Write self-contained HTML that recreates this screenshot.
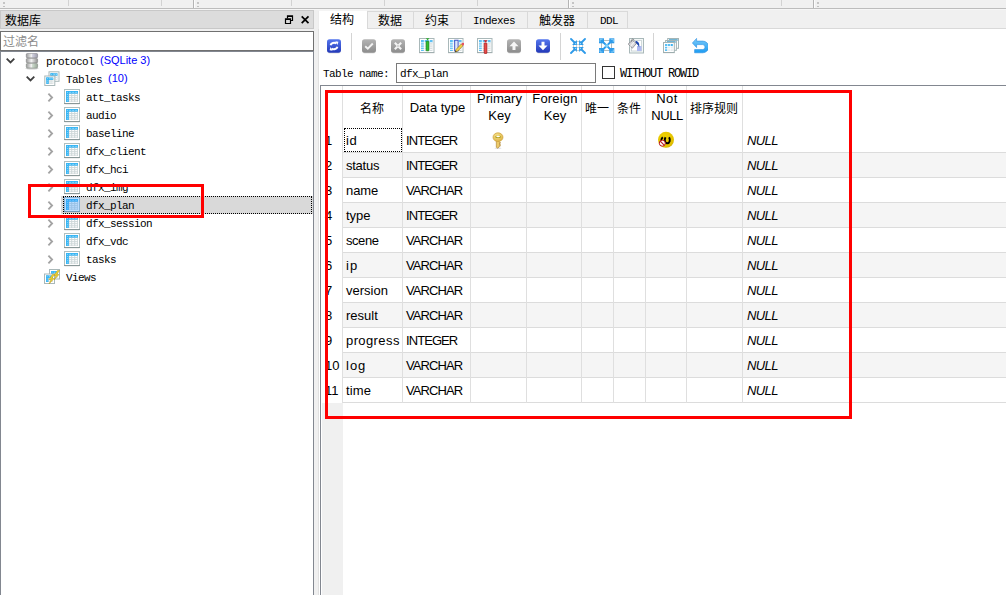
<!DOCTYPE html><html lang="zh"><head><meta charset="utf-8"><title>SQLiteStudio</title><style>
*{box-sizing:border-box;margin:0;padding:0}
html,body{width:1006px;height:595px;overflow:hidden;background:#f0f0f0}
body{position:relative;font-family:"Liberation Mono","Noto Sans CJK SC",monospace;font-size:11px;color:#000}
.abs{position:absolute}
.mono{font-family:"Liberation Mono","Noto Sans CJK SC",monospace;font-size:11px;letter-spacing:-0.6px;line-height:12px;white-space:nowrap;color:#000}
.cjk{font-family:"Liberation Sans","Noto Sans CJK SC",sans-serif;font-size:12px;line-height:14px;white-space:nowrap;color:#000}
.ui{font-family:"Liberation Sans","Noto Sans CJK SC",sans-serif;font-size:13px;line-height:16px;white-space:nowrap;color:#000;letter-spacing:0}
.uc{letter-spacing:-0.93px}
.ni{font-style:italic;letter-spacing:-0.6px}
.blue{font-family:"Liberation Sans",sans-serif;font-size:11px;color:#0000ff;line-height:12px;white-space:nowrap}
.vline{position:absolute;width:1px;background:#dfdfdf}
.hline{position:absolute;height:1px;background:#dcdcdc}
</style></head><body>
<svg width="0" height="0" style="position:absolute"><defs><linearGradient id="gB" x1="0" y1="0" x2="0" y2="1"><stop offset="0" stop-color="#5577ee"/><stop offset="1" stop-color="#2238b8"/></linearGradient><linearGradient id="gG" x1="0" y1="0" x2="0" y2="1"><stop offset="0" stop-color="#b4b4b4"/><stop offset="1" stop-color="#8c8c8c"/></linearGradient><linearGradient id="gU" x1="0" y1="0" x2="0" y2="1"><stop offset="0" stop-color="#7ccaf9"/><stop offset="1" stop-color="#1c9cf2"/></linearGradient><linearGradient id="gDb" x1="0" x2="1" y1="0" y2="0"><stop offset="0" stop-color="#9a9a9a"/><stop offset="0.45" stop-color="#f2f2f2"/><stop offset="1" stop-color="#8e8e8e"/></linearGradient></defs></svg>
<div class="abs" style="left:0;top:8px;width:1006px;height:1px;background:#bcbcbc"></div>
<div class="abs" style="left:0;top:9px;width:1006px;height:1px;background:#f6f6f6"></div>
<div class="abs" style="left:68px;top:0;width:1px;height:6px;background:#d2d2d2"></div>
<div class="abs" style="left:161px;top:0;width:1px;height:6px;background:#d2d2d2"></div>
<div class="abs" style="left:291px;top:0;width:1px;height:6px;background:#d2d2d2"></div>
<div class="abs" style="left:384px;top:0;width:1px;height:6px;background:#d2d2d2"></div>
<div class="abs" style="left:477px;top:0;width:1px;height:6px;background:#d2d2d2"></div>
<div class="abs" style="left:781px;top:0;width:1px;height:6px;background:#d2d2d2"></div>
<div class="abs" style="left:193px;top:0;width:1px;height:8px;background:#b4b4b4"></div><div class="abs" style="left:194px;top:0;width:1px;height:8px;background:#fcfcfc"></div>
<div class="abs" style="left:568px;top:0;width:1px;height:8px;background:#b4b4b4"></div><div class="abs" style="left:569px;top:0;width:1px;height:8px;background:#fcfcfc"></div>
<div class="abs" style="left:813px;top:0;width:1px;height:8px;background:#b4b4b4"></div><div class="abs" style="left:814px;top:0;width:1px;height:8px;background:#fcfcfc"></div>
<div class="abs" style="left:3px;top:2px;width:2px;height:2px;background:#c4c4c4"></div><div class="abs" style="left:3px;top:6px;width:2px;height:1px;background:#c0c0c0"></div>
<div class="abs" style="left:197px;top:2px;width:2px;height:2px;background:#c4c4c4"></div><div class="abs" style="left:197px;top:6px;width:2px;height:1px;background:#c0c0c0"></div>
<div class="abs" style="left:572px;top:2px;width:2px;height:2px;background:#c4c4c4"></div><div class="abs" style="left:572px;top:6px;width:2px;height:1px;background:#c0c0c0"></div>
<div class="abs" style="left:817px;top:2px;width:2px;height:2px;background:#c4c4c4"></div><div class="abs" style="left:817px;top:6px;width:2px;height:1px;background:#c0c0c0"></div>
<div class="abs" style="left:0;top:10px;width:314px;height:19px;background:#dcdcdc;border:1px solid #c8c8c8"></div>
<div class="abs cjk" style="left:5px;top:14px;">数据库</div>
<svg class="abs" style="left:284px;top:14px" width="12" height="12" viewBox="0 0 12 12"><path d="M3.5 4.5V1.8h5v4.7h-2M3.5 2.3h5" fill="none" stroke="#000" stroke-width="1.2"/><path d="M1.5 4.8h5v4.7h-5zM1.5 5.3h5" fill="none" stroke="#000" stroke-width="1.2"/></svg>
<svg class="abs" style="left:300px;top:14px" width="12" height="12" viewBox="0 0 12 12"><path d="M1.7 2.4l6.8 6.8M8.5 2.4l-6.8 6.8" fill="none" stroke="#000" stroke-width="1.7"/></svg>
<div class="abs" style="left:0;top:31px;width:314px;height:20px;background:#fff;border:1px solid #707070"></div>
<div class="abs cjk" style="left:3px;top:35px;color:#8c8c8c">过滤名</div>
<div class="abs" style="left:0;top:51px;width:314px;height:544px;background:#fff;border:1px solid #828790;border-bottom:none"></div>
<svg class="abs" style="left:5px;top:57px" width="12" height="8" viewBox="0 0 12 8"><path d="M1.7 1.6l3.8 3.8l3.8-3.8" fill="none" stroke="#404040" stroke-width="1.8"/></svg>
<svg class="abs" style="left:25px;top:53px" width="15" height="17" viewBox="0 0 15 17"><ellipse cx="7" cy="15.6" rx="6.8" ry="0.9" fill="#000" opacity="0.2"/><rect x="1.3" y="0.4" width="11.3" height="4.5" rx="1.2" fill="url(#gDb)" stroke="#7e7e86" stroke-width="0.6"/><rect x="7" y="0.7" width="5.3" height="3.9" rx="1" fill="#b8b4e0" opacity="0.35"/><rect x="1.3" y="5.4" width="11.3" height="4.5" rx="1.2" fill="url(#gDb)" stroke="#7e7e7e" stroke-width="0.6"/><rect x="1.3" y="10.4" width="11.3" height="4.6" rx="1.2" fill="url(#gDb)" stroke="#7e867e" stroke-width="0.6"/><rect x="7" y="10.7" width="5.3" height="4" rx="1" fill="#a8d0a8" opacity="0.35"/></svg>
<div class="abs mono" style="left:46px;top:56px">protocol</div>
<div class="abs blue" style="left:100px;top:54px">(SQLite 3)</div>
<svg class="abs" style="left:25px;top:75px" width="12" height="8" viewBox="0 0 12 8"><path d="M1.7 1.6l3.8 3.8l3.8-3.8" fill="none" stroke="#404040" stroke-width="1.8"/></svg>
<svg class="abs" style="left:44px;top:71px" width="16" height="16" viewBox="0 0 16 16"><rect x="5" y="0.8" width="10" height="9.5" fill="#fff" stroke="#a9b8b9"/><rect x="6.5" y="2.3" width="7" height="6.5" fill="#cdd7d8"/><rect x="6.5" y="2.3" width="7" height="2.4" fill="#35b5f5"/><rect x="6.5" y="2.3" width="2.4" height="6.5" fill="#35b5f5"/><rect x="9.4" y="5.2" width="1.5" height="1.1" fill="#fff"/><rect x="11.6" y="5.2" width="1.5" height="1.1" fill="#fff"/><rect x="9.4" y="7.1" width="1.5" height="1.1" fill="#fff"/><rect x="11.6" y="7.1" width="1.5" height="1.1" fill="#fff"/><g fill="#8fd8fa"><rect x="7.2" y="3" width="0.9" height="0.9"/><rect x="9.4" y="3" width="1.5" height="0.9"/><rect x="11.6" y="3" width="1.5" height="0.9"/><rect x="7.2" y="5.2" width="0.9" height="0.9"/><rect x="7.2" y="7.1" width="0.9" height="0.9"/></g><rect x="0.8" y="5" width="10" height="9.5" fill="#fff" stroke="#a9b8b9"/><rect x="2.3" y="6.5" width="7" height="6.5" fill="#cdd7d8"/><rect x="2.3" y="6.5" width="7" height="2.4" fill="#35b5f5"/><rect x="2.3" y="6.5" width="2.4" height="6.5" fill="#35b5f5"/><rect x="5.2" y="9.4" width="1.5" height="1.1" fill="#fff"/><rect x="7.4" y="9.4" width="1.5" height="1.1" fill="#fff"/><rect x="5.2" y="11.3" width="1.5" height="1.1" fill="#fff"/><rect x="7.4" y="11.3" width="1.5" height="1.1" fill="#fff"/><g fill="#8fd8fa"><rect x="3" y="7.2" width="0.9" height="0.9"/><rect x="5.2" y="7.2" width="1.5" height="0.9"/><rect x="7.3999999999999995" y="7.2" width="1.5" height="0.9"/><rect x="3" y="9.4" width="0.9" height="0.9"/><rect x="3" y="11.3" width="0.9" height="0.9"/></g></svg>
<div class="abs mono" style="left:66px;top:74px">Tables</div>
<div class="abs blue" style="left:108px;top:72px">(10)</div>
<svg class="abs" style="left:47px;top:92px" width="8" height="12" viewBox="0 0 8 12"><path d="M1.4 1.7l3.7 3.8l-3.7 3.8" fill="none" stroke="#a3a3a3" stroke-width="1.8"/></svg>
<svg class="abs" style="left:64px;top:89px" width="16" height="16" viewBox="0 0 16 16"><rect x="0.5" y="0.5" width="15" height="14" fill="#fff" stroke="#b0bfbf"/><rect x="0" y="14" width="16" height="1" fill="#7f8f8f" opacity="0.8"/><rect x="0.5" y="15" width="15" height="0.8" fill="#000" opacity="0.08"/><rect x="2" y="2" width="12" height="11" fill="#cdd7d8"/><rect x="2" y="2" width="12" height="2.6" fill="#35b5f5"/><rect x="2" y="2" width="2.8" height="11" fill="#35b5f5"/><rect x="5.2" y="5" width="2" height="1.1" fill="#fff"/><rect x="8.2" y="5" width="2" height="1.1" fill="#fff"/><rect x="11.2" y="5" width="2" height="1.1" fill="#fff"/><rect x="5.2" y="7.1" width="2" height="1.1" fill="#fff"/><rect x="8.2" y="7.1" width="2" height="1.1" fill="#fff"/><rect x="11.2" y="7.1" width="2" height="1.1" fill="#fff"/><rect x="5.2" y="9.2" width="2" height="1.1" fill="#fff"/><rect x="8.2" y="9.2" width="2" height="1.1" fill="#fff"/><rect x="11.2" y="9.2" width="2" height="1.1" fill="#fff"/><rect x="5.2" y="11.3" width="2" height="1.1" fill="#fff"/><rect x="8.2" y="11.3" width="2" height="1.1" fill="#fff"/><rect x="11.2" y="11.3" width="2" height="1.1" fill="#fff"/><g fill="#8fd8fa"><rect x="5.2" y="2.9" width="2" height="0.9"/><rect x="8.2" y="2.9" width="2" height="0.9"/><rect x="11.2" y="2.9" width="2" height="0.9"/><rect x="2.9" y="2.9" width="1" height="1"/><rect x="2.9" y="5" width="1" height="1"/><rect x="2.9" y="7.1" width="1" height="1"/><rect x="2.9" y="9.2" width="1" height="1"/><rect x="2.9" y="11.3" width="1" height="1"/></g></svg>
<div class="abs mono" style="left:86px;top:92px">att_tasks</div>
<svg class="abs" style="left:47px;top:110px" width="8" height="12" viewBox="0 0 8 12"><path d="M1.4 1.7l3.7 3.8l-3.7 3.8" fill="none" stroke="#a3a3a3" stroke-width="1.8"/></svg>
<svg class="abs" style="left:64px;top:107px" width="16" height="16" viewBox="0 0 16 16"><rect x="0.5" y="0.5" width="15" height="14" fill="#fff" stroke="#b0bfbf"/><rect x="0" y="14" width="16" height="1" fill="#7f8f8f" opacity="0.8"/><rect x="0.5" y="15" width="15" height="0.8" fill="#000" opacity="0.08"/><rect x="2" y="2" width="12" height="11" fill="#cdd7d8"/><rect x="2" y="2" width="12" height="2.6" fill="#35b5f5"/><rect x="2" y="2" width="2.8" height="11" fill="#35b5f5"/><rect x="5.2" y="5" width="2" height="1.1" fill="#fff"/><rect x="8.2" y="5" width="2" height="1.1" fill="#fff"/><rect x="11.2" y="5" width="2" height="1.1" fill="#fff"/><rect x="5.2" y="7.1" width="2" height="1.1" fill="#fff"/><rect x="8.2" y="7.1" width="2" height="1.1" fill="#fff"/><rect x="11.2" y="7.1" width="2" height="1.1" fill="#fff"/><rect x="5.2" y="9.2" width="2" height="1.1" fill="#fff"/><rect x="8.2" y="9.2" width="2" height="1.1" fill="#fff"/><rect x="11.2" y="9.2" width="2" height="1.1" fill="#fff"/><rect x="5.2" y="11.3" width="2" height="1.1" fill="#fff"/><rect x="8.2" y="11.3" width="2" height="1.1" fill="#fff"/><rect x="11.2" y="11.3" width="2" height="1.1" fill="#fff"/><g fill="#8fd8fa"><rect x="5.2" y="2.9" width="2" height="0.9"/><rect x="8.2" y="2.9" width="2" height="0.9"/><rect x="11.2" y="2.9" width="2" height="0.9"/><rect x="2.9" y="2.9" width="1" height="1"/><rect x="2.9" y="5" width="1" height="1"/><rect x="2.9" y="7.1" width="1" height="1"/><rect x="2.9" y="9.2" width="1" height="1"/><rect x="2.9" y="11.3" width="1" height="1"/></g></svg>
<div class="abs mono" style="left:86px;top:110px">audio</div>
<svg class="abs" style="left:47px;top:128px" width="8" height="12" viewBox="0 0 8 12"><path d="M1.4 1.7l3.7 3.8l-3.7 3.8" fill="none" stroke="#a3a3a3" stroke-width="1.8"/></svg>
<svg class="abs" style="left:64px;top:125px" width="16" height="16" viewBox="0 0 16 16"><rect x="0.5" y="0.5" width="15" height="14" fill="#fff" stroke="#b0bfbf"/><rect x="0" y="14" width="16" height="1" fill="#7f8f8f" opacity="0.8"/><rect x="0.5" y="15" width="15" height="0.8" fill="#000" opacity="0.08"/><rect x="2" y="2" width="12" height="11" fill="#cdd7d8"/><rect x="2" y="2" width="12" height="2.6" fill="#35b5f5"/><rect x="2" y="2" width="2.8" height="11" fill="#35b5f5"/><rect x="5.2" y="5" width="2" height="1.1" fill="#fff"/><rect x="8.2" y="5" width="2" height="1.1" fill="#fff"/><rect x="11.2" y="5" width="2" height="1.1" fill="#fff"/><rect x="5.2" y="7.1" width="2" height="1.1" fill="#fff"/><rect x="8.2" y="7.1" width="2" height="1.1" fill="#fff"/><rect x="11.2" y="7.1" width="2" height="1.1" fill="#fff"/><rect x="5.2" y="9.2" width="2" height="1.1" fill="#fff"/><rect x="8.2" y="9.2" width="2" height="1.1" fill="#fff"/><rect x="11.2" y="9.2" width="2" height="1.1" fill="#fff"/><rect x="5.2" y="11.3" width="2" height="1.1" fill="#fff"/><rect x="8.2" y="11.3" width="2" height="1.1" fill="#fff"/><rect x="11.2" y="11.3" width="2" height="1.1" fill="#fff"/><g fill="#8fd8fa"><rect x="5.2" y="2.9" width="2" height="0.9"/><rect x="8.2" y="2.9" width="2" height="0.9"/><rect x="11.2" y="2.9" width="2" height="0.9"/><rect x="2.9" y="2.9" width="1" height="1"/><rect x="2.9" y="5" width="1" height="1"/><rect x="2.9" y="7.1" width="1" height="1"/><rect x="2.9" y="9.2" width="1" height="1"/><rect x="2.9" y="11.3" width="1" height="1"/></g></svg>
<div class="abs mono" style="left:86px;top:128px">baseline</div>
<svg class="abs" style="left:47px;top:146px" width="8" height="12" viewBox="0 0 8 12"><path d="M1.4 1.7l3.7 3.8l-3.7 3.8" fill="none" stroke="#a3a3a3" stroke-width="1.8"/></svg>
<svg class="abs" style="left:64px;top:143px" width="16" height="16" viewBox="0 0 16 16"><rect x="0.5" y="0.5" width="15" height="14" fill="#fff" stroke="#b0bfbf"/><rect x="0" y="14" width="16" height="1" fill="#7f8f8f" opacity="0.8"/><rect x="0.5" y="15" width="15" height="0.8" fill="#000" opacity="0.08"/><rect x="2" y="2" width="12" height="11" fill="#cdd7d8"/><rect x="2" y="2" width="12" height="2.6" fill="#35b5f5"/><rect x="2" y="2" width="2.8" height="11" fill="#35b5f5"/><rect x="5.2" y="5" width="2" height="1.1" fill="#fff"/><rect x="8.2" y="5" width="2" height="1.1" fill="#fff"/><rect x="11.2" y="5" width="2" height="1.1" fill="#fff"/><rect x="5.2" y="7.1" width="2" height="1.1" fill="#fff"/><rect x="8.2" y="7.1" width="2" height="1.1" fill="#fff"/><rect x="11.2" y="7.1" width="2" height="1.1" fill="#fff"/><rect x="5.2" y="9.2" width="2" height="1.1" fill="#fff"/><rect x="8.2" y="9.2" width="2" height="1.1" fill="#fff"/><rect x="11.2" y="9.2" width="2" height="1.1" fill="#fff"/><rect x="5.2" y="11.3" width="2" height="1.1" fill="#fff"/><rect x="8.2" y="11.3" width="2" height="1.1" fill="#fff"/><rect x="11.2" y="11.3" width="2" height="1.1" fill="#fff"/><g fill="#8fd8fa"><rect x="5.2" y="2.9" width="2" height="0.9"/><rect x="8.2" y="2.9" width="2" height="0.9"/><rect x="11.2" y="2.9" width="2" height="0.9"/><rect x="2.9" y="2.9" width="1" height="1"/><rect x="2.9" y="5" width="1" height="1"/><rect x="2.9" y="7.1" width="1" height="1"/><rect x="2.9" y="9.2" width="1" height="1"/><rect x="2.9" y="11.3" width="1" height="1"/></g></svg>
<div class="abs mono" style="left:86px;top:146px">dfx_client</div>
<svg class="abs" style="left:47px;top:164px" width="8" height="12" viewBox="0 0 8 12"><path d="M1.4 1.7l3.7 3.8l-3.7 3.8" fill="none" stroke="#a3a3a3" stroke-width="1.8"/></svg>
<svg class="abs" style="left:64px;top:161px" width="16" height="16" viewBox="0 0 16 16"><rect x="0.5" y="0.5" width="15" height="14" fill="#fff" stroke="#b0bfbf"/><rect x="0" y="14" width="16" height="1" fill="#7f8f8f" opacity="0.8"/><rect x="0.5" y="15" width="15" height="0.8" fill="#000" opacity="0.08"/><rect x="2" y="2" width="12" height="11" fill="#cdd7d8"/><rect x="2" y="2" width="12" height="2.6" fill="#35b5f5"/><rect x="2" y="2" width="2.8" height="11" fill="#35b5f5"/><rect x="5.2" y="5" width="2" height="1.1" fill="#fff"/><rect x="8.2" y="5" width="2" height="1.1" fill="#fff"/><rect x="11.2" y="5" width="2" height="1.1" fill="#fff"/><rect x="5.2" y="7.1" width="2" height="1.1" fill="#fff"/><rect x="8.2" y="7.1" width="2" height="1.1" fill="#fff"/><rect x="11.2" y="7.1" width="2" height="1.1" fill="#fff"/><rect x="5.2" y="9.2" width="2" height="1.1" fill="#fff"/><rect x="8.2" y="9.2" width="2" height="1.1" fill="#fff"/><rect x="11.2" y="9.2" width="2" height="1.1" fill="#fff"/><rect x="5.2" y="11.3" width="2" height="1.1" fill="#fff"/><rect x="8.2" y="11.3" width="2" height="1.1" fill="#fff"/><rect x="11.2" y="11.3" width="2" height="1.1" fill="#fff"/><g fill="#8fd8fa"><rect x="5.2" y="2.9" width="2" height="0.9"/><rect x="8.2" y="2.9" width="2" height="0.9"/><rect x="11.2" y="2.9" width="2" height="0.9"/><rect x="2.9" y="2.9" width="1" height="1"/><rect x="2.9" y="5" width="1" height="1"/><rect x="2.9" y="7.1" width="1" height="1"/><rect x="2.9" y="9.2" width="1" height="1"/><rect x="2.9" y="11.3" width="1" height="1"/></g></svg>
<div class="abs mono" style="left:86px;top:164px">dfx_hci</div>
<svg class="abs" style="left:47px;top:182px" width="8" height="12" viewBox="0 0 8 12"><path d="M1.4 1.7l3.7 3.8l-3.7 3.8" fill="none" stroke="#a3a3a3" stroke-width="1.8"/></svg>
<svg class="abs" style="left:64px;top:179px" width="16" height="16" viewBox="0 0 16 16"><rect x="0.5" y="0.5" width="15" height="14" fill="#fff" stroke="#b0bfbf"/><rect x="0" y="14" width="16" height="1" fill="#7f8f8f" opacity="0.8"/><rect x="0.5" y="15" width="15" height="0.8" fill="#000" opacity="0.08"/><rect x="2" y="2" width="12" height="11" fill="#cdd7d8"/><rect x="2" y="2" width="12" height="2.6" fill="#35b5f5"/><rect x="2" y="2" width="2.8" height="11" fill="#35b5f5"/><rect x="5.2" y="5" width="2" height="1.1" fill="#fff"/><rect x="8.2" y="5" width="2" height="1.1" fill="#fff"/><rect x="11.2" y="5" width="2" height="1.1" fill="#fff"/><rect x="5.2" y="7.1" width="2" height="1.1" fill="#fff"/><rect x="8.2" y="7.1" width="2" height="1.1" fill="#fff"/><rect x="11.2" y="7.1" width="2" height="1.1" fill="#fff"/><rect x="5.2" y="9.2" width="2" height="1.1" fill="#fff"/><rect x="8.2" y="9.2" width="2" height="1.1" fill="#fff"/><rect x="11.2" y="9.2" width="2" height="1.1" fill="#fff"/><rect x="5.2" y="11.3" width="2" height="1.1" fill="#fff"/><rect x="8.2" y="11.3" width="2" height="1.1" fill="#fff"/><rect x="11.2" y="11.3" width="2" height="1.1" fill="#fff"/><g fill="#8fd8fa"><rect x="5.2" y="2.9" width="2" height="0.9"/><rect x="8.2" y="2.9" width="2" height="0.9"/><rect x="11.2" y="2.9" width="2" height="0.9"/><rect x="2.9" y="2.9" width="1" height="1"/><rect x="2.9" y="5" width="1" height="1"/><rect x="2.9" y="7.1" width="1" height="1"/><rect x="2.9" y="9.2" width="1" height="1"/><rect x="2.9" y="11.3" width="1" height="1"/></g></svg>
<div class="abs mono" style="left:86px;top:182px">dfx_img</div>
<div class="abs" style="left:61px;top:196px;width:252px;height:18px;background:#d9d9d9"></div><div class="abs" style="left:63px;top:196px;width:249px;height:18px;border:1px dotted #000"></div>
<svg class="abs" style="left:47px;top:200px" width="8" height="12" viewBox="0 0 8 12"><path d="M1.4 1.7l3.7 3.8l-3.7 3.8" fill="none" stroke="#a3a3a3" stroke-width="1.8"/></svg>
<svg class="abs" style="left:64px;top:197px" width="16" height="16" viewBox="0 0 16 16"><rect x="0.5" y="0.5" width="15" height="14" fill="#fff" stroke="#b0bfbf"/><rect x="0" y="14" width="16" height="1" fill="#7f8f8f" opacity="0.8"/><rect x="0.5" y="15" width="15" height="0.8" fill="#000" opacity="0.08"/><rect x="2" y="2" width="12" height="11" fill="#cdd7d8"/><rect x="2" y="2" width="12" height="2.6" fill="#35b5f5"/><rect x="2" y="2" width="2.8" height="11" fill="#35b5f5"/><rect x="5.2" y="5" width="2" height="1.1" fill="#fff"/><rect x="8.2" y="5" width="2" height="1.1" fill="#fff"/><rect x="11.2" y="5" width="2" height="1.1" fill="#fff"/><rect x="5.2" y="7.1" width="2" height="1.1" fill="#fff"/><rect x="8.2" y="7.1" width="2" height="1.1" fill="#fff"/><rect x="11.2" y="7.1" width="2" height="1.1" fill="#fff"/><rect x="5.2" y="9.2" width="2" height="1.1" fill="#fff"/><rect x="8.2" y="9.2" width="2" height="1.1" fill="#fff"/><rect x="11.2" y="9.2" width="2" height="1.1" fill="#fff"/><rect x="5.2" y="11.3" width="2" height="1.1" fill="#fff"/><rect x="8.2" y="11.3" width="2" height="1.1" fill="#fff"/><rect x="11.2" y="11.3" width="2" height="1.1" fill="#fff"/><g fill="#8fd8fa"><rect x="5.2" y="2.9" width="2" height="0.9"/><rect x="8.2" y="2.9" width="2" height="0.9"/><rect x="11.2" y="2.9" width="2" height="0.9"/><rect x="2.9" y="2.9" width="1" height="1"/><rect x="2.9" y="5" width="1" height="1"/><rect x="2.9" y="7.1" width="1" height="1"/><rect x="2.9" y="9.2" width="1" height="1"/><rect x="2.9" y="11.3" width="1" height="1"/></g><rect x="0" y="0" width="16" height="15" fill="#3399ff" opacity="0.33"/></svg>
<div class="abs mono" style="left:86px;top:200px">dfx_plan</div>
<svg class="abs" style="left:47px;top:218px" width="8" height="12" viewBox="0 0 8 12"><path d="M1.4 1.7l3.7 3.8l-3.7 3.8" fill="none" stroke="#a3a3a3" stroke-width="1.8"/></svg>
<svg class="abs" style="left:64px;top:215px" width="16" height="16" viewBox="0 0 16 16"><rect x="0.5" y="0.5" width="15" height="14" fill="#fff" stroke="#b0bfbf"/><rect x="0" y="14" width="16" height="1" fill="#7f8f8f" opacity="0.8"/><rect x="0.5" y="15" width="15" height="0.8" fill="#000" opacity="0.08"/><rect x="2" y="2" width="12" height="11" fill="#cdd7d8"/><rect x="2" y="2" width="12" height="2.6" fill="#35b5f5"/><rect x="2" y="2" width="2.8" height="11" fill="#35b5f5"/><rect x="5.2" y="5" width="2" height="1.1" fill="#fff"/><rect x="8.2" y="5" width="2" height="1.1" fill="#fff"/><rect x="11.2" y="5" width="2" height="1.1" fill="#fff"/><rect x="5.2" y="7.1" width="2" height="1.1" fill="#fff"/><rect x="8.2" y="7.1" width="2" height="1.1" fill="#fff"/><rect x="11.2" y="7.1" width="2" height="1.1" fill="#fff"/><rect x="5.2" y="9.2" width="2" height="1.1" fill="#fff"/><rect x="8.2" y="9.2" width="2" height="1.1" fill="#fff"/><rect x="11.2" y="9.2" width="2" height="1.1" fill="#fff"/><rect x="5.2" y="11.3" width="2" height="1.1" fill="#fff"/><rect x="8.2" y="11.3" width="2" height="1.1" fill="#fff"/><rect x="11.2" y="11.3" width="2" height="1.1" fill="#fff"/><g fill="#8fd8fa"><rect x="5.2" y="2.9" width="2" height="0.9"/><rect x="8.2" y="2.9" width="2" height="0.9"/><rect x="11.2" y="2.9" width="2" height="0.9"/><rect x="2.9" y="2.9" width="1" height="1"/><rect x="2.9" y="5" width="1" height="1"/><rect x="2.9" y="7.1" width="1" height="1"/><rect x="2.9" y="9.2" width="1" height="1"/><rect x="2.9" y="11.3" width="1" height="1"/></g></svg>
<div class="abs mono" style="left:86px;top:218px">dfx_session</div>
<svg class="abs" style="left:47px;top:236px" width="8" height="12" viewBox="0 0 8 12"><path d="M1.4 1.7l3.7 3.8l-3.7 3.8" fill="none" stroke="#a3a3a3" stroke-width="1.8"/></svg>
<svg class="abs" style="left:64px;top:233px" width="16" height="16" viewBox="0 0 16 16"><rect x="0.5" y="0.5" width="15" height="14" fill="#fff" stroke="#b0bfbf"/><rect x="0" y="14" width="16" height="1" fill="#7f8f8f" opacity="0.8"/><rect x="0.5" y="15" width="15" height="0.8" fill="#000" opacity="0.08"/><rect x="2" y="2" width="12" height="11" fill="#cdd7d8"/><rect x="2" y="2" width="12" height="2.6" fill="#35b5f5"/><rect x="2" y="2" width="2.8" height="11" fill="#35b5f5"/><rect x="5.2" y="5" width="2" height="1.1" fill="#fff"/><rect x="8.2" y="5" width="2" height="1.1" fill="#fff"/><rect x="11.2" y="5" width="2" height="1.1" fill="#fff"/><rect x="5.2" y="7.1" width="2" height="1.1" fill="#fff"/><rect x="8.2" y="7.1" width="2" height="1.1" fill="#fff"/><rect x="11.2" y="7.1" width="2" height="1.1" fill="#fff"/><rect x="5.2" y="9.2" width="2" height="1.1" fill="#fff"/><rect x="8.2" y="9.2" width="2" height="1.1" fill="#fff"/><rect x="11.2" y="9.2" width="2" height="1.1" fill="#fff"/><rect x="5.2" y="11.3" width="2" height="1.1" fill="#fff"/><rect x="8.2" y="11.3" width="2" height="1.1" fill="#fff"/><rect x="11.2" y="11.3" width="2" height="1.1" fill="#fff"/><g fill="#8fd8fa"><rect x="5.2" y="2.9" width="2" height="0.9"/><rect x="8.2" y="2.9" width="2" height="0.9"/><rect x="11.2" y="2.9" width="2" height="0.9"/><rect x="2.9" y="2.9" width="1" height="1"/><rect x="2.9" y="5" width="1" height="1"/><rect x="2.9" y="7.1" width="1" height="1"/><rect x="2.9" y="9.2" width="1" height="1"/><rect x="2.9" y="11.3" width="1" height="1"/></g></svg>
<div class="abs mono" style="left:86px;top:236px">dfx_vdc</div>
<svg class="abs" style="left:47px;top:254px" width="8" height="12" viewBox="0 0 8 12"><path d="M1.4 1.7l3.7 3.8l-3.7 3.8" fill="none" stroke="#a3a3a3" stroke-width="1.8"/></svg>
<svg class="abs" style="left:64px;top:251px" width="16" height="16" viewBox="0 0 16 16"><rect x="0.5" y="0.5" width="15" height="14" fill="#fff" stroke="#b0bfbf"/><rect x="0" y="14" width="16" height="1" fill="#7f8f8f" opacity="0.8"/><rect x="0.5" y="15" width="15" height="0.8" fill="#000" opacity="0.08"/><rect x="2" y="2" width="12" height="11" fill="#cdd7d8"/><rect x="2" y="2" width="12" height="2.6" fill="#35b5f5"/><rect x="2" y="2" width="2.8" height="11" fill="#35b5f5"/><rect x="5.2" y="5" width="2" height="1.1" fill="#fff"/><rect x="8.2" y="5" width="2" height="1.1" fill="#fff"/><rect x="11.2" y="5" width="2" height="1.1" fill="#fff"/><rect x="5.2" y="7.1" width="2" height="1.1" fill="#fff"/><rect x="8.2" y="7.1" width="2" height="1.1" fill="#fff"/><rect x="11.2" y="7.1" width="2" height="1.1" fill="#fff"/><rect x="5.2" y="9.2" width="2" height="1.1" fill="#fff"/><rect x="8.2" y="9.2" width="2" height="1.1" fill="#fff"/><rect x="11.2" y="9.2" width="2" height="1.1" fill="#fff"/><rect x="5.2" y="11.3" width="2" height="1.1" fill="#fff"/><rect x="8.2" y="11.3" width="2" height="1.1" fill="#fff"/><rect x="11.2" y="11.3" width="2" height="1.1" fill="#fff"/><g fill="#8fd8fa"><rect x="5.2" y="2.9" width="2" height="0.9"/><rect x="8.2" y="2.9" width="2" height="0.9"/><rect x="11.2" y="2.9" width="2" height="0.9"/><rect x="2.9" y="2.9" width="1" height="1"/><rect x="2.9" y="5" width="1" height="1"/><rect x="2.9" y="7.1" width="1" height="1"/><rect x="2.9" y="9.2" width="1" height="1"/><rect x="2.9" y="11.3" width="1" height="1"/></g></svg>
<div class="abs mono" style="left:86px;top:254px">tasks</div>
<svg class="abs" style="left:44px;top:269px" width="16" height="16" viewBox="0 0 16 16"><rect x="5.5" y="0.5" width="10" height="9.5" fill="#fff" stroke="#a9b8b9"/><rect x="7" y="2" width="7" height="6.5" fill="#cdd7d8"/><rect x="7" y="2" width="7" height="2.4" fill="#35b5f5"/><rect x="7" y="2" width="2.4" height="6.5" fill="#35b5f5"/><rect x="9.9" y="4.9" width="1.5" height="1.1" fill="#fff"/><rect x="12.1" y="4.9" width="1.5" height="1.1" fill="#fff"/><rect x="9.9" y="6.8" width="1.5" height="1.1" fill="#fff"/><rect x="12.1" y="6.8" width="1.5" height="1.1" fill="#fff"/><g fill="#8fd8fa"><rect x="7.7" y="2.7" width="0.9" height="0.9"/><rect x="9.9" y="2.7" width="1.5" height="0.9"/><rect x="12.1" y="2.7" width="1.5" height="0.9"/><rect x="7.7" y="4.9" width="0.9" height="0.9"/><rect x="7.7" y="6.8" width="0.9" height="0.9"/></g><rect x="0.5" y="5" width="10" height="9.5" fill="#fff" stroke="#a9b8b9"/><rect x="2" y="6.5" width="7" height="6.5" fill="#cdd7d8"/><rect x="2" y="6.5" width="7" height="2.4" fill="#35b5f5"/><rect x="2" y="6.5" width="2.4" height="6.5" fill="#35b5f5"/><rect x="4.9" y="9.4" width="1.5" height="1.1" fill="#fff"/><rect x="7.1" y="9.4" width="1.5" height="1.1" fill="#fff"/><rect x="4.9" y="11.3" width="1.5" height="1.1" fill="#fff"/><rect x="7.1" y="11.3" width="1.5" height="1.1" fill="#fff"/><g fill="#8fd8fa"><rect x="2.7" y="7.2" width="0.9" height="0.9"/><rect x="4.9" y="7.2" width="1.5" height="0.9"/><rect x="7.1" y="7.2" width="1.5" height="0.9"/><rect x="2.7" y="9.4" width="0.9" height="0.9"/><rect x="2.7" y="11.3" width="0.9" height="0.9"/></g><path d="M13.5 1.5l-3.5 5h2.2l-2.2 4.5l5-5.5h-2.3l2.8-4z" fill="#f5d52a" stroke="#b79a18" stroke-width="0.5"/><path d="M8.5 5.5l-3.5 5h2.2l-2.2 4.5l5-5.5h-2.3l2.8-4z" fill="#f5d52a" stroke="#b79a18" stroke-width="0.5"/></svg>
<div class="abs mono" style="left:66px;top:272px">Views</div>
<div class="abs" style="left:28px;top:184px;width:176px;height:34px;border:3px solid #ff0000"></div>
<div class="abs" style="left:318px;top:29px;width:1px;height:566px;background:#e0e0e0"></div>
<div class="abs" style="left:319px;top:29px;width:687px;height:566px;background:#fff"></div>
<div class="abs" style="left:318px;top:28px;width:688px;height:1px;background:#d9d9d9"></div>
<div class="abs" style="left:318px;top:10px;width:50px;height:19px;background:#fff;border:1px solid #ececec;border-top-color:#f4f4f4;border-bottom:none"></div>
<div class="abs cjk" style="left:317px;width:50px;text-align:center;top:13px">结构</div>
<div class="abs" style="left:367px;top:11px;width:47px;height:18px;background:#f0f0f0;border:1px solid #d9d9d9"></div>
<div class="abs cjk" style="left:367px;width:46px;text-align:center;top:14px">数据</div>
<div class="abs" style="left:413px;top:11px;width:49px;height:18px;background:#f0f0f0;border:1px solid #d9d9d9"></div>
<div class="abs cjk" style="left:413px;width:48px;text-align:center;top:14px">约束</div>
<div class="abs" style="left:461px;top:11px;width:67px;height:18px;background:#f0f0f0;border:1px solid #d9d9d9"></div>
<div class="abs mono" style="left:461px;width:66px;text-align:center;top:15px">Indexes</div>
<div class="abs" style="left:527px;top:11px;width:61px;height:18px;background:#f0f0f0;border:1px solid #d9d9d9"></div>
<div class="abs cjk" style="left:527px;width:60px;text-align:center;top:14px">触发器</div>
<div class="abs" style="left:587px;top:11px;width:41px;height:18px;background:#f0f0f0;border:1px solid #d9d9d9"></div>
<div class="abs mono" style="left:589px;width:40px;text-align:center;top:15px">DDL</div>
<div class="abs" style="left:351px;top:33px;width:1px;height:27px;background:#d4d4d4"></div>
<div class="abs" style="left:560px;top:33px;width:1px;height:27px;background:#d4d4d4"></div>
<div class="abs" style="left:653px;top:33px;width:1px;height:27px;background:#d4d4d4"></div>
<svg class="abs" style="left:326px;top:38px" width="16" height="16" viewBox="0 0 16 16" ><rect x="1.3" y="2.6" width="13.4" height="13" rx="2.5" fill="#000" opacity="0.13"/><rect x="1" y="1.2" width="14" height="13.5" rx="2.6" fill="url(#gB)"/><path d="M4.6 7.3a3.5 2.9 0 0 1 5.8-1.7" fill="none" stroke="#fff" stroke-width="1.9"/><path d="M9.3 3.3l3.1 0.5l-0.9 3.1z" fill="#fff"/><path d="M11.4 8.7a3.5 2.9 0 0 1-5.8 1.7" fill="none" stroke="#fff" stroke-width="1.9"/><path d="M6.7 12.7l-3.1-0.5l0.9-3.1z" fill="#fff"/></svg>
<svg class="abs" style="left:361px;top:38px" width="16" height="16" viewBox="0 0 16 16" ><rect x="1.3" y="2.6" width="13.4" height="13" rx="2.5" fill="#000" opacity="0.13"/><rect x="1" y="1.2" width="14" height="13.5" rx="2.6" fill="url(#gG)"/><path d="M4.2 8.2l2.6 2.5l5-5.2" fill="none" stroke="#f2f2f2" stroke-width="1.9"/></svg>
<svg class="abs" style="left:390px;top:38px" width="16" height="16" viewBox="0 0 16 16" ><rect x="1.3" y="2.6" width="13.4" height="13" rx="2.5" fill="#000" opacity="0.13"/><rect x="1" y="1.2" width="14" height="13.5" rx="2.6" fill="url(#gG)"/><path d="M4.8 4.8l6.4 6.4M11.2 4.8l-6.4 6.4" fill="none" stroke="#f4f4f4" stroke-width="2.1"/><rect x="7.2" y="7.2" width="1.6" height="1.6" fill="#c4c4c4"/></svg>
<svg class="abs" style="left:419px;top:38px" width="16" height="16" viewBox="0 0 16 16" ><rect x="0.5" y="0.5" width="14.5" height="14" fill="#fff" stroke="#a9b8b9"/><rect x="0" y="14.5" width="15.5" height="1" fill="#000" opacity="0.1"/><rect x="2" y="2" width="11.5" height="11" fill="#d4dcde"/><rect x="2" y="2" width="11.5" height="2.5" fill="#5cc0f5"/><rect x="2" y="2" width="3" height="11" fill="#5cc0f5"/><g stroke="#fff" stroke-width="0.9"><path d="M2 4.8h11.5M2 7h11.5M2 9.2h11.5M2 11.4h11.5M5.3 2v11M10.3 2v11"/></g><rect x="7.2" y="3.2" width="2.7" height="9.6" rx="0.5" fill="#2fc02f" stroke="#0f7a0f" stroke-width="0.7"/><path d="M6.8 0.2h3.6l-1.8 2z" fill="#25a825"/></svg>
<svg class="abs" style="left:448px;top:38px" width="16" height="16" viewBox="0 0 16 16" ><rect x="0.5" y="0.5" width="14.5" height="14" fill="#fff" stroke="#a9b8b9"/><rect x="0" y="14.5" width="15.5" height="1" fill="#000" opacity="0.1"/><rect x="2" y="2" width="11.5" height="11" fill="#d4dcde"/><rect x="2" y="2" width="11.5" height="2.5" fill="#5cc0f5"/><rect x="2" y="2" width="3" height="11" fill="#5cc0f5"/><g stroke="#fff" stroke-width="0.9"><path d="M2 4.8h11.5M2 7h11.5M2 9.2h11.5M2 11.4h11.5M5.3 2v11M10.3 2v11"/></g><rect x="6.7" y="2.2" width="3.4" height="10.8" fill="#dfe7f8" stroke="#3348c0" stroke-width="0.9"/><path d="M7.2 14l0.9-2.6l5.2-5.4l1.7 1.7l-5.2 5.4z" fill="#f3d34a" stroke="#8a6a10" stroke-width="0.6"/><path d="M13.3 6l0.9-0.9a1.1 1.1 0 0 1 1.7 1.7l-0.9 0.9z" fill="#e85060"/><path d="M7.2 14l0.5-1.4l0.9 0.9z" fill="#111"/></svg>
<svg class="abs" style="left:477px;top:38px" width="16" height="17" viewBox="0 0 16 17" ><rect x="0.5" y="0.5" width="14.5" height="14" fill="#fff" stroke="#a9b8b9"/><rect x="0" y="14.5" width="15.5" height="1" fill="#000" opacity="0.1"/><rect x="2" y="2" width="11.5" height="11" fill="#d4dcde"/><rect x="2" y="2" width="11.5" height="2.5" fill="#5cc0f5"/><rect x="2" y="2" width="3" height="11" fill="#5cc0f5"/><g stroke="#fff" stroke-width="0.9"><path d="M2 4.8h11.5M2 7h11.5M2 9.2h11.5M2 11.4h11.5M5.3 2v11M10.3 2v11"/></g><rect x="7.2" y="5" width="2.7" height="10.4" rx="0.5" fill="#e84a4a" stroke="#a01515" stroke-width="0.7"/><path d="M6.6 2.2h4l-2 2.2z" fill="#d82020"/></svg>
<svg class="abs" style="left:506px;top:38px" width="16" height="16" viewBox="0 0 16 16" ><rect x="1.3" y="2.6" width="13.4" height="13" rx="2.5" fill="#000" opacity="0.13"/><rect x="1" y="1.2" width="14" height="13.5" rx="2.6" fill="url(#gG)"/><path d="M8 3.5L12.5 8.3H9.5V12H6.5V8.3H3.5z" fill="#f6f6f6"/></svg>
<svg class="abs" style="left:535px;top:38px" width="16" height="16" viewBox="0 0 16 16" ><rect x="1.3" y="2.6" width="13.4" height="13" rx="2.5" fill="#000" opacity="0.13"/><rect x="1" y="1.2" width="14" height="13.5" rx="2.6" fill="url(#gB)"/><path d="M8 12.3L12.5 7.5H9.5V3.8H6.5V7.5H3.5z" fill="#fff"/></svg>
<svg class="abs" style="left:570px;top:38px" width="16" height="16" viewBox="0 0 16 16" ><rect x="3.5" y="3.5" width="9" height="9" fill="#fff" stroke="#b9c3c5" stroke-width="0.8"/><g stroke="#c3cccf" stroke-width="0.8"><path d="M6.5 3.5v9M9.5 3.5v9M3.5 6.5h9M3.5 9.5h9"/></g><g stroke="#2e9bea" stroke-width="1.8" fill="none" stroke-linecap="round"><path d="M1 1l4.5 4.5M15 1l-4.5 4.5M1 15l4.5-4.5M15 15l-4.5-4.5"/></g><g fill="#2e9bea"><path d="M6.9 2.1v4.8h-4.8z"/><path d="M9.1 2.1v4.8h4.8z"/><path d="M6.9 13.9v-4.8h-4.8z"/><path d="M9.1 13.9v-4.8h4.8z"/></g><g fill="#9bd9fa"><rect x="5" y="5" width="1.2" height="1.2"/><rect x="9.8" y="5" width="1.2" height="1.2"/><rect x="5" y="9.8" width="1.2" height="1.2"/><rect x="9.8" y="9.8" width="1.2" height="1.2"/></g></svg>
<svg class="abs" style="left:599px;top:38px" width="16" height="16" viewBox="0 0 16 16" ><rect x="2.5" y="2.5" width="10" height="10" fill="#fff" stroke="#aab6b8" stroke-width="0.9"/><g stroke="#2e9bea" stroke-width="1.8" fill="none"><path d="M3 3l9.5 9.5M12.5 3l-9.5 9.5"/></g><rect x="6.3" y="6.3" width="2.9" height="2.9" fill="#7fd0f8"/><g fill="#2e9bea"><rect x="0" y="0.3" width="5" height="5"/><rect x="10.3" y="0.3" width="5" height="5"/><rect x="0" y="10" width="5" height="5"/><rect x="10.3" y="10" width="5" height="5"/></g><g stroke="#8fd3f8" stroke-width="0.9" fill="none"><path d="M1 3.8v-2.5h2.5M14.3 3.8v-2.5h-2.5M1 11.5v2.5h2.5M14.3 11.5v2.5h-2.5"/></g></svg>
<svg class="abs" style="left:628px;top:38px" width="16" height="16" viewBox="0 0 16 16" ><rect x="1.5" y="0.5" width="14" height="14.5" fill="#f4f8f8" stroke="#a9b8b9"/><rect x="3.5" y="2.5" width="10" height="10.5" fill="#fff" stroke="#c5d0d2" stroke-width="0.8"/><rect x="9" y="8" width="4.5" height="5" fill="#aebaf0"/><path d="M7.5 3c2.8 0 4.5 2.5 3.6 6.5c-0.6-2.2-1.6-3.4-3.8-4z" fill="#1c46b0"/><path d="M0.2 6l4.2-3.6l4 3l-4 4.8z" fill="#d8d8dc" stroke="#77777c" stroke-width="0.7"/><path d="M2.2 8.6l4-4.6" stroke="#fff" stroke-width="1"/><path d="M3.2 3.6c-0.3-2.6 2.3-3.4 3-1.2" fill="none" stroke="#66666a" stroke-width="0.8"/></svg>
<svg class="abs" style="left:663px;top:38px" width="16" height="16" viewBox="0 0 16 16" ><rect x="4.7" y="0.5" width="10.8" height="9.8" fill="#fff" stroke="#a4b5b6"/><rect x="6" y="1.3" width="8.7" height="1.4" fill="#3a96c0"/><rect x="2.6" y="2.5" width="10.8" height="9.8" fill="#fff" stroke="#a4b5b6"/><rect x="3.9" y="3.3" width="8.7" height="1.4" fill="#3a96c0"/><rect x="0.5" y="4.5" width="10.8" height="10" fill="#fff" stroke="#a4b5b6"/><rect x="0" y="14.6" width="11.8" height="0.8" fill="#000" opacity="0.1"/><rect x="2" y="6" width="7.8" height="7" fill="#e6ecee"/><rect x="2" y="6" width="7.8" height="2.3" fill="#3db4f2"/><rect x="2" y="6" width="2.5" height="7" fill="#5cc0f5"/><g stroke="#fff" stroke-width="0.8"><path d="M2 8.5h7.8M2 10.8h7.8M4.7 6v7M7.3 6v7"/></g></svg>
<svg class="abs" style="left:692px;top:38px" width="16" height="16" viewBox="0 0 16 16" ><path d="M4.6 0.4L0.4 5l4.2 4.6V6.6h5.9a2.5 2.5 0 0 1 0 5H2.6v3.2h8.2a5.85 5.85 0 0 0 0-11.7H4.6z" fill="url(#gU)" stroke="#2a8de0" stroke-width="0.6"/></svg>
<div class="abs mono" style="left:323px;top:68px">Table name:</div>
<div class="abs" style="left:396px;top:63px;width:200px;height:20px;background:#fff;border:1px solid #7a7a7a"></div>
<div class="abs mono" style="left:400px;top:68px">dfx_plan</div>
<div class="abs" style="left:602px;top:66px;width:13px;height:13px;background:#fff;border:1px solid #333"></div>
<div class="abs mono" style="left:620px;top:67.5px;font-size:12px;letter-spacing:-1.2px">WITHOUT ROWID</div>
<div class="abs" style="left:320px;top:85px;width:686px;height:510px;background:#fff;border-left:1px solid #828790;border-top:1px solid #828790"></div>
<div class="abs" style="left:322px;top:403px;width:21px;height:192px;background:#f0f0f0"></div>
<div class="hline" style="left:343px;top:152px;width:663px"></div>
<div class="abs" style="left:343px;top:153px;width:663px;height:24px;background:#f5f5f5"></div>
<div class="hline" style="left:343px;top:177px;width:663px"></div>
<div class="hline" style="left:343px;top:202px;width:663px"></div>
<div class="abs" style="left:343px;top:203px;width:663px;height:24px;background:#f5f5f5"></div>
<div class="hline" style="left:343px;top:227px;width:663px"></div>
<div class="hline" style="left:343px;top:252px;width:663px"></div>
<div class="abs" style="left:343px;top:253px;width:663px;height:24px;background:#f5f5f5"></div>
<div class="hline" style="left:343px;top:277px;width:663px"></div>
<div class="hline" style="left:343px;top:302px;width:663px"></div>
<div class="abs" style="left:343px;top:303px;width:663px;height:24px;background:#f5f5f5"></div>
<div class="hline" style="left:343px;top:327px;width:663px"></div>
<div class="hline" style="left:343px;top:352px;width:663px"></div>
<div class="abs" style="left:343px;top:353px;width:663px;height:24px;background:#f5f5f5"></div>
<div class="hline" style="left:343px;top:377px;width:663px"></div>
<div class="hline" style="left:343px;top:402px;width:663px"></div>
<div class="vline" style="left:342px;top:86px;height:317px"></div>
<div class="vline" style="left:402px;top:86px;height:317px"></div>
<div class="vline" style="left:470px;top:86px;height:317px"></div>
<div class="vline" style="left:526px;top:86px;height:317px"></div>
<div class="vline" style="left:581px;top:86px;height:317px"></div>
<div class="vline" style="left:613px;top:86px;height:317px"></div>
<div class="vline" style="left:645px;top:86px;height:317px"></div>
<div class="vline" style="left:686px;top:86px;height:317px"></div>
<div class="vline" style="left:742px;top:86px;height:317px"></div>
<div class="abs ui" style="left:342.5px;width:59px;text-align:center;top:100.5px;font-size:12px">名称</div>
<div class="abs ui" style="left:404px;width:67px;text-align:center;top:100px">Data type</div>
<div class="abs ui" style="left:472px;width:55px;text-align:center;top:90px;line-height:17px">Primary<br>Key</div>
<div class="abs ui" style="left:528px;width:54px;text-align:center;top:90px;line-height:17px"><span style="letter-spacing:0.2px">Foreign</span><br>Key</div>
<div class="abs ui" style="left:581.5px;width:31px;text-align:center;top:100.5px;font-size:12px">唯一</div>
<div class="abs ui" style="left:613.5px;width:31px;text-align:center;top:100.5px;font-size:12px">条件</div>
<div class="abs ui" style="left:647px;width:40px;text-align:center;top:90px;line-height:17px"><span style="letter-spacing:0.5px">Not</span><br><span style="letter-spacing:-0.4px">NULL</span></div>
<div class="abs ui" style="left:686.5px;width:55px;text-align:center;top:100.5px;font-size:12px">排序规则</div>
<div class="abs ui" style="left:325px;top:133px">1</div>
<div class="abs ui" style="left:346px;top:133px;letter-spacing:0.6px">id</div>
<div class="abs ui uc" style="left:406px;top:133px">INTEGER</div>
<div class="abs ui ni" style="left:747px;top:133px">NULL</div>
<div class="abs ui" style="left:325px;top:158px">2</div>
<div class="abs ui" style="left:346px;top:158px;letter-spacing:-0.25px">status</div>
<div class="abs ui uc" style="left:406px;top:158px">INTEGER</div>
<div class="abs ui ni" style="left:747px;top:158px">NULL</div>
<div class="abs ui" style="left:325px;top:183px">3</div>
<div class="abs ui" style="left:346px;top:183px;letter-spacing:-0.1px">name</div>
<div class="abs ui uc" style="left:406px;top:183px">VARCHAR</div>
<div class="abs ui ni" style="left:747px;top:183px">NULL</div>
<div class="abs ui" style="left:325px;top:208px">4</div>
<div class="abs ui" style="left:346px;top:208px;letter-spacing:0px">type</div>
<div class="abs ui uc" style="left:406px;top:208px">INTEGER</div>
<div class="abs ui ni" style="left:747px;top:208px">NULL</div>
<div class="abs ui" style="left:325px;top:233px">5</div>
<div class="abs ui" style="left:346px;top:233px;letter-spacing:-0.45px">scene</div>
<div class="abs ui uc" style="left:406px;top:233px">VARCHAR</div>
<div class="abs ui ni" style="left:747px;top:233px">NULL</div>
<div class="abs ui" style="left:325px;top:258px">6</div>
<div class="abs ui" style="left:346px;top:258px;letter-spacing:1px">ip</div>
<div class="abs ui uc" style="left:406px;top:258px">VARCHAR</div>
<div class="abs ui ni" style="left:747px;top:258px">NULL</div>
<div class="abs ui" style="left:325px;top:283px">7</div>
<div class="abs ui" style="left:346px;top:283px;letter-spacing:0px">version</div>
<div class="abs ui uc" style="left:406px;top:283px">VARCHAR</div>
<div class="abs ui ni" style="left:747px;top:283px">NULL</div>
<div class="abs ui" style="left:325px;top:308px">8</div>
<div class="abs ui" style="left:346px;top:308px;letter-spacing:0px">result</div>
<div class="abs ui uc" style="left:406px;top:308px">VARCHAR</div>
<div class="abs ui ni" style="left:747px;top:308px">NULL</div>
<div class="abs ui" style="left:325px;top:333px">9</div>
<div class="abs ui" style="left:346px;top:333px;letter-spacing:0.4px">progress</div>
<div class="abs ui uc" style="left:406px;top:333px">INTEGER</div>
<div class="abs ui ni" style="left:747px;top:333px">NULL</div>
<div class="abs ui" style="left:325px;top:358px">10</div>
<div class="abs ui" style="left:346px;top:358px;letter-spacing:1px">log</div>
<div class="abs ui uc" style="left:406px;top:358px">VARCHAR</div>
<div class="abs ui ni" style="left:747px;top:358px">NULL</div>
<div class="abs ui" style="left:325px;top:383px">11</div>
<div class="abs ui" style="left:346px;top:383px;letter-spacing:0.1px">time</div>
<div class="abs ui uc" style="left:406px;top:383px">VARCHAR</div>
<div class="abs ui ni" style="left:747px;top:383px">NULL</div>
<div class="abs" style="left:344px;top:128px;width:58px;height:24px;border:1px dotted #000"></div>
<svg class="abs" style="left:490px;top:130.5px" width="16" height="20" viewBox="0 0 16 20"><defs><radialGradient id="gK" cx="0.4" cy="0.3" r="0.8"><stop offset="0" stop-color="#f6e08a"/><stop offset="1" stop-color="#d9ae3e"/></radialGradient></defs><ellipse cx="8" cy="17.3" rx="3.5" ry="0.7" fill="#000" opacity="0.12"/><path d="M6.3 9.5h2.8v1.5l1.5 0.7l-1.5 0.7l1.5 0.8l-1.5 0.7l1.5 0.8l-1.5 0.8v0.6l-1.5 1.1l-1.3-1z" fill="#ecca6a" stroke="#a87c28" stroke-width="0.6"/><ellipse cx="8" cy="6.2" rx="5" ry="4.4" fill="url(#gK)" stroke="#d0a440" stroke-width="0.7"/><rect x="5.3" y="4.7" width="5.5" height="2.4" rx="1.1" fill="#b3a21e"/><ellipse cx="8.1" cy="5.5" rx="1.9" ry="0.7" fill="#fff"/></svg>
<svg class="abs" style="left:657px;top:131px" width="18" height="18" viewBox="0 0 18 18"><defs><radialGradient id="gN" cx="0.4" cy="0.35" r="0.75"><stop offset="0" stop-color="#f0d400"/><stop offset="0.8" stop-color="#e2c000"/><stop offset="1" stop-color="#b89800"/></radialGradient></defs><circle cx="9" cy="8.8" r="8" fill="url(#gN)"/><path d="M5.8 6.2c-1.9 1.8-1.9 4.6-0.4 6.2" fill="none" stroke="#000" stroke-width="1.9"/><path d="M8.5 6.2c-1.4 2.7-0.7 6 1.8 6s3.2-3.3 1.8-6" fill="none" stroke="#000" stroke-width="1.9"/><circle cx="5.3" cy="12.2" r="3" fill="#fff" stroke="#b81818" stroke-width="1"/><path d="M3.2 10.1l4.2 4.2" stroke="#c02020" stroke-width="1.2"/></svg>
<div class="abs" style="left:325px;top:90px;width:527px;height:329px;border:3px solid #ff0000"></div>
</body></html>
